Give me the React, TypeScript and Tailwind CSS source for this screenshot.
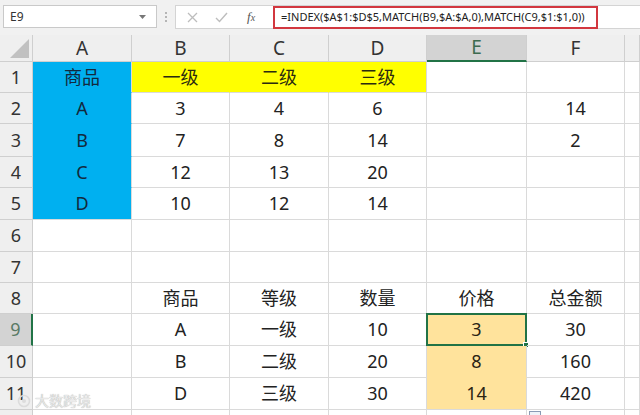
import { ReactNode } from 'react';

type Cell = { v?: string; fill?: 'blue' | 'yellow' | 'orange' };

const colWidths = [99, 98, 99, 98, 100, 98, 15];
const colLetters = ['A', 'B', 'C', 'D', 'E', 'F', ''];
const rowHeights = [31, 31, 33, 31, 32, 32, 31, 31, 32, 32, 32, 10];

const b = (v: string): Cell => ({ v, fill: 'blue' });
const y = (v: string): Cell => ({ v, fill: 'yellow' });
const o = (v: string): Cell => ({ v, fill: 'orange' });
const t = (v = ''): Cell => ({ v });

const rows: Cell[][] = [
  [b('商品'), y('一级'), y('二级'), y('三级'), t(), t(), t()],
  [b('A'), t('3'), t('4'), t('6'), t(), t('14'), t()],
  [b('B'), t('7'), t('8'), t('14'), t(), t('2'), t()],
  [b('C'), t('12'), t('13'), t('20'), t(), t(), t()],
  [b('D'), t('10'), t('12'), t('14'), t(), t(), t()],
  [t(), t(), t(), t(), t(), t(), t()],
  [t(), t(), t(), t(), t(), t(), t()],
  [t(), t('商品'), t('等级'), t('数量'), t('价格'), t('总金额'), t()],
  [t(), t('A'), t('一级'), t('10'), o('3'), t('30'), t()],
  [t(), t('B'), t('二级'), t('20'), o('8'), t('160'), t()],
  [t(), t('D'), t('三级'), t('30'), o('14'), t('420'), t()],
  [t(), t(), t(), t(), t(), t(), t()],
];

const fillClass = {
  blue: 'bg-[#00b0f0] border-[#00b0f0] text-[#13293d]',
  yellow: 'bg-[#ffff00] border-[#ffff00] text-[#2a2a10]',
  orange: 'bg-[#ffe39c] border-[#ffe39c] text-[#2b2414]',
};

function HeaderCell({ children, selected, w }: { children: ReactNode; selected?: boolean; w: number }) {
  return (
    <div
      style={{ width: w }}
      className={`flex h-full shrink-0 items-center justify-center border-r border-[#cfcfcf] text-[19px] ${
        selected
          ? 'border-b-2 border-b-[#217346] bg-[#d3d3d3] text-[#3d6b4f]'
          : 'border-b border-b-[#cfcfcf] bg-[#efefef] text-[#333]'
      }`}
    >
      {children}
    </div>
  );
}

export default function App() {
  return (
    <div
      className="relative h-[415px] w-[640px] overflow-hidden bg-white"
      style={{ fontFamily: '"Noto Sans", "Noto Sans CJK SC", sans-serif' }}
    >
      {/* formula bar */}
      <div className="flex h-[35px] items-start bg-[#f1f1f1] pt-[5px]">
        <div className="ml-[3px] flex h-[23px] w-[154px] items-center justify-between border border-[#c9c9c9] bg-white pl-[6px] pr-[10px] text-[12px] text-[#333]">
          <span>E9</span>
          <svg width="7" height="4" viewBox="0 0 7 4">
            <path d="M0 0 L7 0 L3.5 4 Z" fill="#777" />
          </svg>
        </div>
        <div className="flex h-[23px] w-[18px] flex-col items-center justify-center gap-[2px]">
          <span className="h-[2px] w-[2px] bg-[#b5b5b5]" />
          <span className="h-[2px] w-[2px] bg-[#b5b5b5]" />
          <span className="h-[2px] w-[2px] bg-[#b5b5b5]" />
        </div>
        <div className="flex h-[24px] flex-1 items-center border border-r-0 border-[#d4d4d4] bg-white">
          <div className="flex w-[97px] items-center pl-[10px] text-[#b8b8b8]">
            <svg width="11" height="11" viewBox="0 0 11 11" className="ml-[1px]">
              <path d="M1 1 L10 10 M10 1 L1 10" stroke="#bdbdbd" strokeWidth="1.3" />
            </svg>
            <svg width="13" height="11" viewBox="0 0 13 11" className="ml-[17px]">
              <path d="M1 6 L4.5 9.5 L12 1" stroke="#bdbdbd" strokeWidth="1.4" fill="none" />
            </svg>
            <span className="ml-[19px] font-['Liberation_Serif'] text-[13px] italic text-[#555]">
              f<span className="text-[10px]">x</span>
            </span>
          </div>
          <div className="flex h-[23px] w-[325px] items-center overflow-hidden whitespace-nowrap border-2 border-[#d2373f] pl-[6px] text-[11px] text-[#222]">
            =INDEX($A$1:$D$5,MATCH(B9,$A:$A,0),MATCH(C9,$1:$1,0))
          </div>
        </div>
      </div>

      {/* column headers */}
      <div className="flex h-[27px]">
        <div className="relative flex h-full w-[33px] shrink-0 items-end justify-end border-r border-b border-[#cfcfcf] bg-[#efefef] p-[3px]">
          <svg width="19" height="19" viewBox="0 0 19 19">
            <path d="M19 0 L19 19 L0 19 Z" fill="#c1c1c1" />
          </svg>
        </div>
        {colWidths.map((w, i) => (
          <HeaderCell key={i} w={w} selected={colLetters[i] === 'E'}>
            {colLetters[i]}
          </HeaderCell>
        ))}
      </div>

      {/* rows */}
      {rows.map((r, ri) => (
        <div key={ri} className="flex" style={{ height: rowHeights[ri] }}>
          <div
            className={`flex w-[33px] shrink-0 items-center justify-center border-b border-[#cfcfcf] text-[18px] ${
              ri === 8
                ? 'border-r-2 border-r-[#217346] bg-[#d3d3d3] text-[#5a7a66]'
                : 'border-r border-r-[#cfcfcf] bg-[#efefef] text-[#333]'
            }`}
          >
            {ri < 11 ? ri + 1 : ''}
          </div>
          {r.map((c, ci) => {
            const nextRow = rows[ri + 1];
            const below = nextRow ? nextRow[ci] : undefined;
            const right = r[ci + 1];
            const sameBelow = c.fill && below && below.fill === c.fill;
            const sameRight = c.fill && right && right.fill === c.fill;
            return (
              <div
                key={ci}
                style={{ width: colWidths[ci] }}
                className={`relative flex shrink-0 items-center justify-center border-r border-b text-[18px] ${
                  c.fill ? fillClass[c.fill] : 'border-[#dadada] text-[#222]'
                } ${sameBelow ? '' : 'border-b-[#dadada]'} ${sameRight ? '' : 'border-r-[#dadada]'}`}
              >
                {c.v}
                {ri === 8 && ci === 4 && (
                  <div className="absolute -top-[1px] -left-[1px] -right-[1px] -bottom-[1px] border-2 border-[#217346]">
                    <div className="absolute -right-[4px] -bottom-[4px] h-[6px] w-[6px] border border-white bg-[#217346]" />
                  </div>
                )}
                {ri === 11 && ci === 5 && (
                  <div className="absolute left-[2px] top-[1px] h-[9px] w-[12px] border border-[#8a9bb5] bg-[#eef2f8]" />
                )}
              </div>
            );
          })}
        </div>
      ))}

      {/* watermark */}
      <svg className="absolute left-[17px] top-[394px]" width="14" height="14" viewBox="0 0 14 14">
        <circle cx="7" cy="7" r="5.5" fill="none" stroke="#dcdcdc" strokeWidth="1.6" />
        <circle cx="7" cy="7" r="2" fill="#dcdcdc" />
      </svg>
      <div className="absolute top-[393px] left-[35px] text-[14px] leading-[16px] text-[#e8e8e8] [text-shadow:0_0_1px_#9a9a9a]">
        大数跨境
      </div>
    </div>
  );
}
